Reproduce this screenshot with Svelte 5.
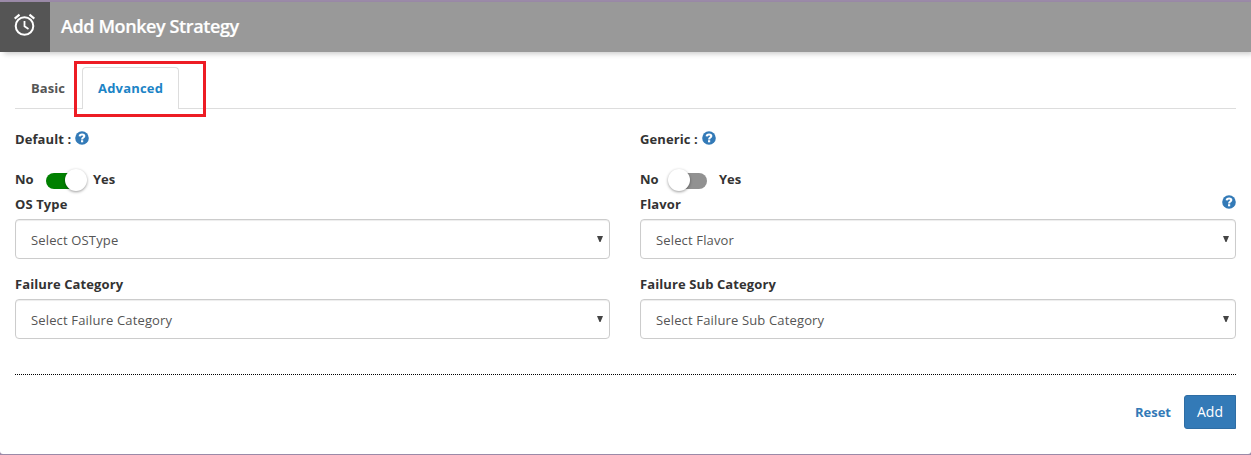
<script>
  let active = $state('Advanced');
  let flags = $state([
    { label: 'Default :', on: true },
    { label: 'Generic :', on: false }
  ]);
  const fields = [
    { label: 'OS Type', text: 'Select OSType', help: false },
    { label: 'Flavor', text: 'Select Flavor', help: true },
    { label: 'Failure Category', text: 'Select Failure Category', help: false },
    { label: 'Failure Sub Category', text: 'Select Failure Sub Category', help: false }
  ];
</script>

{#snippet help()}
  <svg class="help" viewBox="0 0 14 14" width="14" height="14">
    <circle cx="7" cy="7" r="6.8" fill="#337ab7" />
    <path d="M4.7 5.4C4.8 3.9 5.8 3.5 7.1 3.5c1.4 0 2.2.6 2.2 1.6C9.3 6.6 7.1 6.5 7.1 8.5" fill="none" stroke="#fff" stroke-width="2.1" />
    <path d="M6 9.2h2.2v2.1H6z" fill="#fff" />
  </svg>
{/snippet}

<div class="dialog">
  <header>
    <div class="badge">
      <svg viewBox="0 0 24 24" width="24" height="24" fill="none" stroke="#fff" stroke-width="2">
        <circle cx="11.5" cy="13" r="8.8" />
        <path d="M11.5 8v5.3l4 2.6" stroke-width="1.8" />
        <path d="M1.7 5.6 6.5 1.7M16.5 1.7 21.3 5.6" stroke-width="2.2" />
      </svg>
    </div>
    <h1>Add Monkey Strategy</h1>
  </header>

  <main>
    <nav>
      {#each ['Basic', 'Advanced'] as tab}
        <button class="tab" class:active={active === tab} onclick={() => (active = tab)}>{tab}</button>
      {/each}
      <div class="highlight"></div>
    </nav>

    <section class="grid flags">
      {#each flags as flag}
        <div>
          <div class="flag-label"><span>{flag.label}</span>{@render help()}</div>
          <div class="switch-row">
            <span class="no">No</span>
            <button class="switch" class:on={flag.on} aria-label={flag.label} onclick={() => (flag.on = !flag.on)}>
              <span class="knob"></span>
            </button>
            <span class="yes">Yes</span>
          </div>
        </div>
      {/each}
    </section>

    <section class="grid fields">
      {#each fields as field}
        <div>
          <div class="field-label"><span>{field.label}</span>{#if field.help}{@render help()}{/if}</div>
          <div class="select">
            <span>{field.text}</span>
            <svg viewBox="0 0 6 6" width="6" height="6"><path d="M0 0h6L3.5 6h-1z" fill="#444" /></svg>
          </div>
        </div>
      {/each}
    </section>

    <footer>
      <button class="reset">Reset</button>
      <button class="add">Add</button>
    </footer>
  </main>
</div>

<style>
  :global(body) {
    background: #9b8aa8;
  }
  * {
    box-sizing: border-box;
  }
  .dialog {
    height: 454px;
    border-top: 2px solid #9b8aa8;
    border-radius: 0 0 3px 3px;
    background: #fff;
    color: #333;
    font: 600 13px/20px 'Open Sans', 'Noto Sans', sans-serif;
  }
  button {
    margin: 0;
    padding: 0;
    border: 0;
    background: none;
    color: inherit;
    font: inherit;
  }
  header {
    display: flex;
    height: 50px;
    background: #999;
    box-shadow: 3px 3px 5px -1px rgba(0, 0, 0, 0.2);
  }
  .badge {
    width: 50px;
    padding: 11px 0 0 13px;
    background: #555;
  }
  .badge svg {
    display: block;
  }
  h1 {
    margin: 0 0 0 11px;
    color: #fff;
    font-size: 18px;
    font-weight: 600;
    line-height: 49px;
    letter-spacing: -0.4px;
    -webkit-text-stroke: 0.2px #fff;
  }
  main {
    padding: 15px 15px 0;
  }
  nav {
    position: relative;
    display: flex;
    height: 42px;
    border-bottom: 1px solid #ddd;
  }
  .tab {
    height: 42px;
    padding: 0 0 2px 15px;
    border: 1px solid transparent;
    border-bottom: 0;
    border-radius: 4px 4px 0 0;
    color: #555;
    font-weight: 700;
    letter-spacing: 0.05px;
    text-align: left;
  }
  .tab:first-child {
    width: 65px;
    margin-right: 2px;
  }
  .tab.active {
    width: 97px;
    border-color: #ddd;
    background: #fff;
    color: #1c84c6;
    letter-spacing: 0.2px;
  }
  .highlight {
    position: absolute;
    left: 59px;
    top: -6px;
    width: 132px;
    height: 56px;
    border: 3px solid #ed1c24;
    pointer-events: none;
  }
  .grid {
    display: grid;
    grid-template-columns: 595px 1fr;
    column-gap: 30px;
  }
  .flags {
    height: 85px;
    padding-top: 20px;
  }
  .flag-label {
    display: flex;
    align-items: center;
    gap: 4px;
    height: 20px;
    font-weight: 700;
    letter-spacing: 0.09px;
  }
  .help {
    display: block;
    position: relative;
    top: -1px;
  }
  .switch-row {
    display: flex;
    height: 20px;
    margin-top: 20px;
    font-weight: 700;
  }
  .no {
    width: 31px;
  }
  .switch {
    position: relative;
    width: 38px;
    height: 16px;
    margin-top: 4px;
    margin-right: 9px;
    border-radius: 8px;
    background: #919191;
  }
  .switch:not(.on) {
    width: 36px;
    margin-right: 12px;
  }
  .switch.on {
    background: green;
  }
  .knob {
    position: absolute;
    left: -3px;
    top: -4px;
    width: 22px;
    height: 22px;
    border-radius: 50%;
    background: #fff;
    box-shadow: 0 1px 3px rgba(0, 0, 0, 0.4);
  }
  .on .knob {
    left: 19px;
  }
  .fields {
    grid-auto-rows: 80px;
  }
  .field-label {
    display: flex;
    align-items: center;
    justify-content: space-between;
    height: 25px;
    padding-bottom: 5px;
    font-weight: 700;
    letter-spacing: 0.1px;
  }
  .field-label .help {
    top: -2px;
  }
  .select {
    display: flex;
    align-items: center;
    justify-content: space-between;
    height: 40px;
    padding: 2px 6px 0 15px;
    border: 1px solid #ccc;
    border-radius: 4px;
    box-shadow: inset 0 1px 1px rgba(0, 0, 0, 0.075);
    color: #555;
    font-weight: 400;
    letter-spacing: 0.15px;
  }
  .select svg {
    margin-top: -3px;
  }
  footer {
    display: flex;
    justify-content: flex-end;
    margin-top: 20px;
    padding-top: 20px;
    border-top: 1px dotted #000;
  }
  .reset {
    height: 34px;
    margin-right: 13px;
    color: #337ab7;
    font-weight: 700;
  }
  .add {
    width: 52px;
    height: 34px;
    border: 1px solid #2e6da4;
    border-radius: 3px 0 0 3px;
    background: #337ab7;
    color: #fff;
    font-size: 14px;
    font-weight: 400;
  }
</style>
